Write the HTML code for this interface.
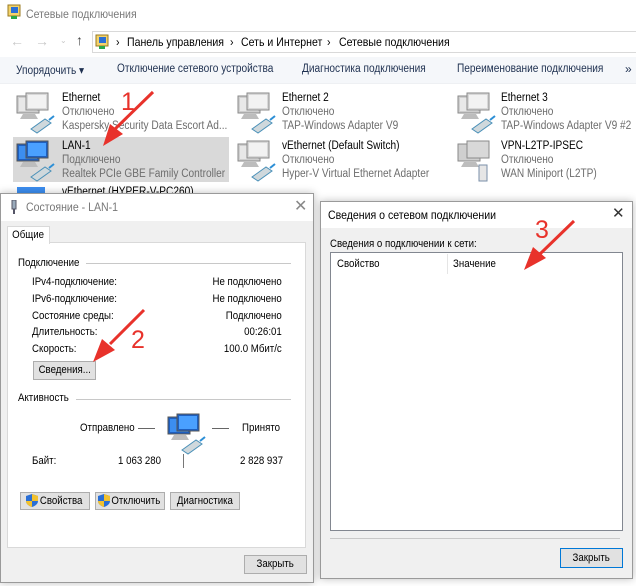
<!DOCTYPE html>
<html><head><meta charset="utf-8"><style>
*{box-sizing:border-box;margin:0;padding:0}
body{width:636px;height:586px;overflow:hidden;background:#fff;font-family:"Liberation Sans",sans-serif;font-size:11px;color:#000;position:relative}
.a{position:absolute;white-space:nowrap}
.s{transform:scaleX(.88);transform-origin:0 0}
.d{transform:scaleX(.88);transform-origin:0 0}
.dr{transform:scaleX(.88);transform-origin:100% 0}
.g{color:#6d6d6d}
.btn{position:absolute;background:#e1e1e1;border:1px solid #adadad;text-align:center;line-height:17px;font-size:11px;white-space:nowrap;overflow:hidden}
.btn span{display:inline-block;transform:scaleX(.88)}
</style></head><body>
<svg width="0" height="0" style="position:absolute">
<defs>
<g id="pc">
<rect x="2" y="4" width="22" height="17" fill="#cfcfcf" stroke="#8a8a8a"/>
<rect x="4" y="6" width="18" height="13" fill="#e8e8e8"/>
<rect x="11" y="1" width="22" height="17" fill="#d8d8d8" stroke="#8a8a8a"/>
<rect x="13" y="3" width="18" height="13" fill="#f2f2f2"/>
<path d="M8 22h12l3 5H5z" fill="#bdbdbd"/>
<path d="M16 37l14-10 6 4-14 10z" fill="#cfd8dc" stroke="#4a90b8"/>
<path d="M34 28l5-4" stroke="#2d8fd6" stroke-width="2"/>
</g>
<g id="pcb">
<rect x="2" y="4" width="22" height="17" fill="#1e5fbf" stroke="#555"/>
<rect x="4" y="6" width="18" height="13" fill="#3c8ef0"/>
<rect x="11" y="1" width="22" height="17" fill="#1e5fbf" stroke="#555"/>
<rect x="13" y="3" width="18" height="13" fill="#4aa0ff"/>
<path d="M8 22h12l3 5H5z" fill="#bdbdbd"/>
<path d="M16 37l14-10 6 4-14 10z" fill="#cfd8dc" stroke="#4a90b8"/>
<path d="M34 28l5-4" stroke="#2d8fd6" stroke-width="2"/>
</g>
<g id="sh"><path d="M6 0L12 2V7C12 10 9 12 6 13C3 12 0 10 0 7V2z" fill="#2a6fd6"/><path d="M6 0L12 2V7H6zM0 7H6V13C3 12 0 10 0 7z" fill="#f2c12e"/></g>
</defs></svg>

<!-- explorer title -->
<svg class="a" style="left:7px;top:4px" width="14" height="16"><rect x="1" y="1" width="12" height="11" fill="#f3d36b" stroke="#9a7a20"/><rect x="4" y="3" width="7" height="6" fill="#2a6fd6"/><rect x="4" y="12" width="6" height="3" fill="#2aa84a"/></svg>
<div class="a s" style="left:26px;top:7px;font-size:12px;color:#7a7a7a">Сетевые подключения</div>
<!-- nav -->
<div class="a" style="left:10px;top:33px;color:#c8c8c8;font-size:14px">←</div>
<div class="a" style="left:35px;top:33px;color:#c8c8c8;font-size:14px">→</div>
<div class="a" style="left:60px;top:36px;color:#c8c8c8;font-size:8px">⌄</div>
<div class="a" style="left:76px;top:32px;color:#444;font-size:14px">↑</div>
<div class="a" style="left:92px;top:31px;width:550px;height:22px;border:1px solid #d9d9d9"></div>
<svg class="a" style="left:95px;top:34px" width="14" height="16"><rect x="1" y="1" width="12" height="11" fill="#f3d36b" stroke="#9a7a20"/><rect x="4" y="3" width="7" height="6" fill="#2a6fd6"/><rect x="4" y="12" width="6" height="3" fill="#2aa84a"/></svg>
<div class="a s" style="left:116px;top:35px;font-size:12px">›</div>
<div class="a s" style="left:127px;top:35px;font-size:12px">Панель управления</div>
<div class="a s" style="left:230px;top:35px;font-size:12px">›</div>
<div class="a s" style="left:241px;top:35px;font-size:12px">Сеть и Интернет</div>
<div class="a s" style="left:327px;top:35px;font-size:12px">›</div>
<div class="a s" style="left:339px;top:35px;font-size:12px">Сетевые подключения</div>
<!-- toolbar -->
<div class="a" style="left:0;top:57px;width:636px;height:27px;background:#f5f7fa;border-bottom:1px solid #eef0f3"></div>
<div class="a s" style="left:16px;top:63px;font-size:11.5px;color:#1e3050">Упорядочить ▾</div>
<div class="a s" style="left:117px;top:63px;font-size:11.5px;color:#1e3050">Отключение сетевого устройства</div>
<div class="a s" style="left:302px;top:63px;font-size:11.5px;color:#1e3050">Диагностика подключения</div>
<div class="a s" style="left:457px;top:63px;font-size:11.5px;color:#1e3050">Переименование подключения</div>
<div class="a" style="left:625px;top:62px;font-size:12px;color:#1e3050">»</div>
<!-- items -->
<div class="a" style="left:13px;top:137px;width:216px;height:45px;background:#d9d9d9"></div>
<svg class="a" style="left:15px;top:92px" width="42" height="42"><use href="#pc"/></svg>
<svg class="a" style="left:236px;top:92px" width="42" height="42"><use href="#pc"/></svg>
<svg class="a" style="left:456px;top:92px" width="42" height="42"><use href="#pc"/></svg>
<svg class="a" style="left:15px;top:140px" width="42" height="42"><use href="#pcb"/></svg>
<svg class="a" style="left:236px;top:140px" width="42" height="42"><use href="#pc"/></svg>
<svg class="a" style="left:456px;top:140px" width="42" height="42"><rect x="2" y="4" width="22" height="17" fill="#cfcfcf" stroke="#8a8a8a"/><rect x="11" y="1" width="22" height="17" fill="#d8d8d8" stroke="#8a8a8a"/><path d="M8 22h12l3 5H5z" fill="#bdbdbd"/><rect x="23" y="25" width="8" height="16" fill="#e6e6e6" stroke="#7a8fa8"/></svg>
<div class="a s" style="left:62px;top:91px;line-height:14px;font-size:11.5px">Ethernet<br><span class="g">Отключено</span><br><span class="g">Kaspersky Security Data Escort Ad...</span></div>
<div class="a s" style="left:282px;top:91px;line-height:14px;font-size:11.5px">Ethernet 2<br><span class="g">Отключено</span><br><span class="g">TAP-Windows Adapter V9</span></div>
<div class="a s" style="left:501px;top:91px;line-height:14px;font-size:11.5px">Ethernet 3<br><span class="g">Отключено</span><br><span class="g">TAP-Windows Adapter V9 #2</span></div>
<div class="a s" style="left:62px;top:139px;line-height:14px;font-size:11.5px">LAN-1<br><span class="g">Подключено</span><br><span class="g">Realtek PCIe GBE Family Controller</span></div>
<div class="a s" style="left:282px;top:139px;line-height:14px;font-size:11.5px">vEthernet (Default Switch)<br><span class="g">Отключено</span><br><span class="g">Hyper-V Virtual Ethernet Adapter</span></div>
<div class="a s" style="left:501px;top:139px;line-height:14px;font-size:11.5px">VPN-L2TP-IPSEC<br><span class="g">Отключено</span><br><span class="g">WAN Miniport (L2TP)</span></div>
<div class="a s" style="left:62px;top:186px;font-size:11.5px">vEthernet (HYPER-V-PC260)</div>
<svg class="a" style="left:17px;top:187px" width="30" height="8"><rect x="0" y="0" width="28" height="8" fill="#3c8ef0"/></svg>

<!-- status dialog -->
<div class="a" style="left:0;top:193px;width:314px;height:390px;background:#f0f0f0;border:1px solid #9a9a9a;box-shadow:0 0 8px rgba(0,0,0,.25)"></div>
<div class="a" style="left:1px;top:194px;width:312px;height:27px;background:#fff"></div>
<svg class="a" style="left:10px;top:200px" width="8" height="14"><rect x="2" y="0" width="4" height="9" fill="#9ab" stroke="#556"/><rect x="3" y="9" width="2" height="5" fill="#556"/></svg>
<div class="a d" style="left:26px;top:200px;font-size:12px;color:#777">Состояние - LAN-1</div>
<div class="a" style="left:294px;top:196px;font-size:16px;color:#888">✕</div>
<div class="a" style="left:7px;top:242px;width:299px;height:306px;background:#fff;border:1px solid #d9d9d9"></div>
<div class="a" style="left:7px;top:226px;width:43px;height:18px;background:#fff;border:1px solid #d9d9d9;border-bottom:none;text-align:center;line-height:17px"><span style="display:inline-block;transform:scaleX(.88)">Общие</span></div>
<div class="a d" style="left:18px;top:257px">Подключение</div>
<div class="a" style="left:86px;top:263px;width:205px;height:1px;background:#c8c8c8"></div>
<div class="a d" style="left:32px;top:274px;line-height:16.8px">IPv4-подключение:<br>IPv6-подключение:<br>Состояние среды:<br>Длительность:<br>Скорость:</div>
<div class="a dr" style="right:354px;top:274px;line-height:16.8px;text-align:right">Не подключено<br>Не подключено<br>Подключено<br>00:26:01<br>100.0 Мбит/с</div>
<div class="btn" style="left:33px;top:361px;width:63px;height:19px"><span>Сведения...</span></div>
<div class="a d" style="left:18px;top:392px">Активность</div>
<div class="a" style="left:76px;top:399px;width:215px;height:1px;background:#c8c8c8"></div>
<div class="a d" style="left:80px;top:422px">Отправлено</div>
<div class="a" style="left:138px;top:428px;width:17px;height:1px;background:#666"></div>
<div class="a" style="left:212px;top:428px;width:17px;height:1px;background:#666"></div>
<div class="a d" style="left:242px;top:422px">Принято</div>
<svg class="a" style="left:166px;top:413px" width="42" height="42"><use href="#pcb"/></svg>
<div class="a d" style="left:32px;top:455px">Байт:</div>
<div class="a d" style="left:118px;top:455px">1 063 280</div>
<div class="a" style="left:183px;top:454px;width:1px;height:14px;background:#777"></div>
<div class="a d" style="left:240px;top:455px">2 828 937</div>
<div class="btn" style="left:20px;top:492px;width:70px;height:18px;padding-left:12px"><span>Свойства</span></div>
<svg class="a" style="left:26px;top:494px" width="13" height="14"><use href="#sh"/></svg>
<div class="btn" style="left:95px;top:492px;width:70px;height:18px;padding-left:12px"><span>Отключить</span></div>
<svg class="a" style="left:98px;top:494px" width="13" height="14"><use href="#sh"/></svg>
<div class="btn" style="left:170px;top:492px;width:70px;height:18px"><span>Диагностика</span></div>
<div class="btn" style="left:244px;top:555px;width:63px;height:19px"><span>Закрыть</span></div>

<!-- details dialog -->
<div class="a" style="left:320px;top:201px;width:313px;height:378px;background:#f0f0f0;border:1px solid #9a9a9a;box-shadow:0 0 8px rgba(0,0,0,.25)"></div>
<div class="a" style="left:321px;top:202px;width:311px;height:26px;background:#fff"></div>
<div class="a d" style="left:328px;top:208px;font-size:12px">Сведения о сетевом подключении</div>
<div class="a" style="left:612px;top:204px;font-size:15px;color:#333">✕</div>
<div class="a d" style="left:330px;top:238px">Сведения о подключении к сети:</div>
<div class="a" style="left:330px;top:252px;width:293px;height:279px;background:#fff;border:1px solid #828790"></div>
<div class="a d" style="left:337px;top:258px">Свойство</div>
<div class="a" style="left:447px;top:254px;width:1px;height:20px;background:#e5e5e5"></div>
<div class="a d" style="left:453px;top:258px">Значение</div>
<div class="a" style="left:330px;top:538px;width:290px;height:1px;background:#c8c8c8"></div>
<div class="btn" style="left:560px;top:548px;width:63px;height:20px;border:1px solid #0078d7;line-height:18px"><span>Закрыть</span></div>

<!-- annotations -->
<svg class="a" style="left:0;top:0" width="636" height="586">
<g fill="#e8322b" stroke="#e8322b">
<path d="M153 92L114 130" stroke-width="3"/><path d="M103 146L110 124 123 134z" stroke="none"/>
<path d="M144 310L110 344" stroke-width="3"/><path d="M93 362L102 339 115 350z" stroke="none"/>
<path d="M574 221L540 254" stroke-width="3"/><path d="M524 270L533 247 546 258z" stroke="none"/>
</g>
<g fill="#e8322b" font-family="Liberation Sans" font-size="25">
<text x="121" y="110">1</text><text x="131" y="348">2</text><text x="535" y="238">3</text>
</g>
</svg>
</body></html>
